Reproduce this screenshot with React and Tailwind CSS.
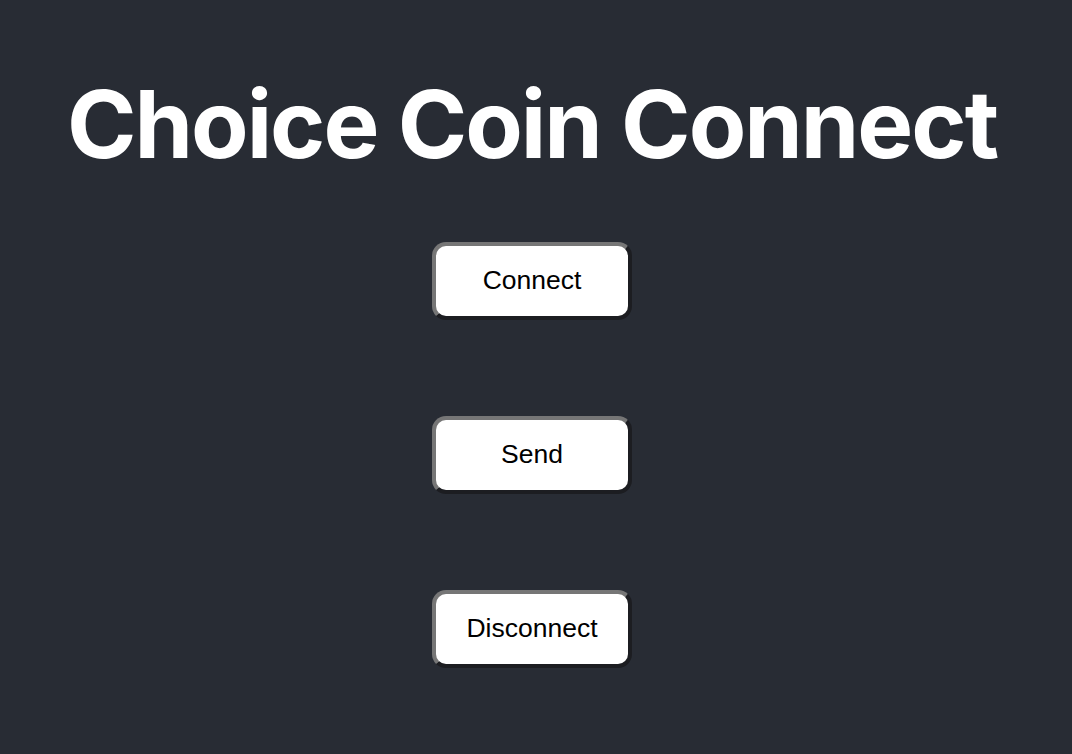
export default function App() {
  const buttons = ["Connect", "Send", "Disconnect"];

  return (
    <div className="flex min-h-[754px] flex-col items-center bg-[#282c34] pr-[8px] pt-[64px]" style={{ fontFamily: "Inter, sans-serif" }}>
      <h1 className="text-[94px] font-bold leading-[120px] tracking-[-2px] text-white">Choice Coin Connect</h1>
      <div className="mt-[58px] flex flex-col items-center gap-[96px]">
        {buttons.map((label) => (
          <button
            key={label}
            type="button"
            className="h-[78px] w-[200px] rounded-[14px] border-4 border-b-[#1c1d21] border-l-[#767676] border-r-[#1c1d21] border-t-[#767676] bg-white text-[26.5px] text-black"
            style={{ fontFamily: '"Liberation Sans", Arial, sans-serif' }}
          >
            {label}
          </button>
        ))}
      </div>
    </div>
  );
}
